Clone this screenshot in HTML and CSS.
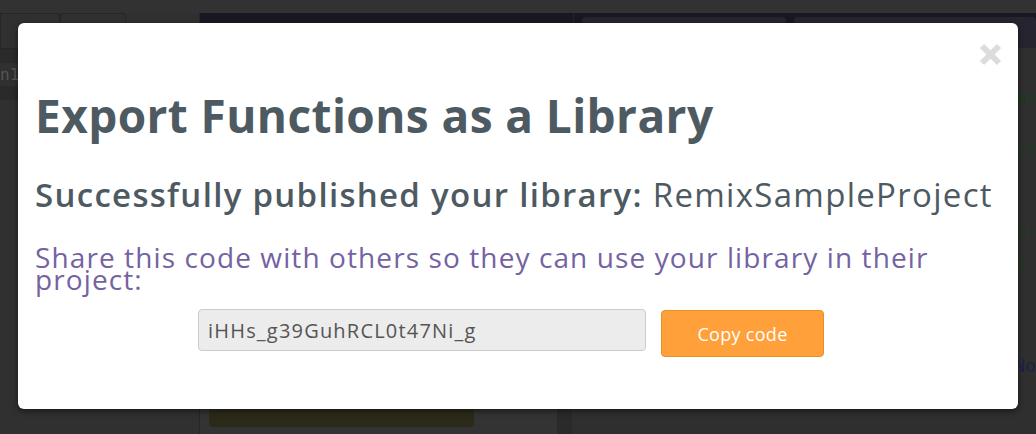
FILE: index.html
```html
<!DOCTYPE html>
<html lang="en">
<head>
  <meta charset="UTF-8">
  <meta name="viewport" content="width=device-width, initial-scale=1.0">
  <title>Export Functions as a Library</title>
  <link rel="stylesheet" href="styles.css">
</head>
<body>
  <!-- app behind the dialog (dimmed) -->
  <div class="app">
    <div class="topbar"></div>
    <div class="main">
      <div class="toolbox">
        <div class="tabs">
          <span class="tab tab-first">es</span>
          <span class="tab"></span>
        </div>
        <div class="tool-row dark"></div>
        <div class="tool-row">n1</div>
        <div class="tool-row dark"></div>
      </div>
      <div class="workspace">
        <div class="ws-header">
          <span class="ws-split"></span>
          <span class="ws-btn"></span>
          <span class="ws-btn">ow</span>
        </div>
        <div class="ws-body">
          <div class="blocks">
            <div class="block"></div>
          </div>
          <div class="code">
            <div>me</div>
            <div class="gap-s">ve</div>
            <div class="gap-l">ir</div>
            <div>d.</div>
            <div class="gap-xl navy">No</div>
          </div>
        </div>
      </div>
    </div>
  </div>

  <!-- dialog -->
  <div class="modal">
    <svg class="close" width="23" height="23" viewBox="0 0 23 23">
      <path d="M3 3 L20 20 M20 3 L3 20" stroke="#dcdcdc" stroke-width="6"/>
    </svg>
    <h1>Export Functions as a Library</h1>
    <h2>Successfully published your library: <span class="lib-name">RemixSampleProject</span></h2>
    <p class="hint">Share this code with others so they can use your library in their project:</p>
    <div class="share-row">
      <input class="code-input" type="text" value="iHHs_g39GuhRCL0t47Ni_g" readonly>
      <button class="btn">Copy code</button>
    </div>
  </div>
</body>
</html>
```

FILE: styles.css
```css
body {
    margin: 0;
    width: 1036px;
    height: 434px;
    overflow: hidden;
    background-color: #313131;
    font-family: "Open Sans", Arial, sans-serif;
}

/* dimmed app */
.app {
    height: 434px;
    display: flex;
    flex-direction: column;
}

.topbar {
    height: 13px;
    background-color: #323232;
}

.main {
    flex: 1;
    display: flex;
}

.toolbox {
    width: 204px;
    box-sizing: border-box;
    background-color: #303030;
    border-right: 1px solid #262626;
}

.tabs {
    display: flex;
    height: 35px;
    border-bottom: 1px solid #262626;
}

.tab {
    width: 64px;
    border: 1px solid #262626;
    border-bottom: none;
    border-radius: 0 4px 0 0;
    color: #4a4a4a;
    font-size: 20px;
    line-height: 35px;
    font-family: "DejaVu Sans", sans-serif;
}

.tab-first {
    width: 58px;
    text-align: right;
    overflow: hidden;
}

.tool-row {
    height: 23px;
    color: #555;
    font-size: 16px;
    line-height: 23px;
    font-family: "DejaVu Sans Mono", monospace;
}

.tool-row.dark {
    height: 14px;
    background-color: #2a2a2a;
}

.workspace {
    flex: 1;
    display: flex;
    flex-direction: column;
}

.ws-header {
    height: 35px;
    background-color: #181724;
    display: flex;
    gap: 8px;
    padding-top: 4px;
    box-sizing: border-box;
}

.ws-split {
    width: 373px;
    border-right: 1px solid #232232;
    margin-top: -4px;
}

.ws-btn {
    width: 200px;
    background-color: #26252f;
    border-radius: 4px 4px 0 0;
    color: #4a4a55;
    font-size: 20px;
    line-height: 30px;
    padding-left: 4px;
}

.ws-btn:last-child {
    flex: 1;
}

.ws-body {
    flex: 1;
    display: flex;
}

.blocks {
    width: 357px;
    background-color: #333;
    position: relative;
}

.block {
    position: absolute;
    left: 9px;
    bottom: 7px;
    width: 265px;
    height: 32px;
    background-color: #2b2a1a;
    border-radius: 4px;
}

.code {
    flex: 1;
    background-color: #2f2f2f;
    border-left: 15px solid #2a2a2a;
    padding-top: 32px;
    padding-left: 442px;
    font-family: "DejaVu Sans Mono", monospace;
    font-size: 18px;
    line-height: 34px;
    color: #1f3a22;
    white-space: nowrap;
    overflow: hidden;
}

.code .gap-s {
    margin-top: 17px;
}

.code .gap-l {
    margin-top: 51px;
}

.code .gap-xl {
    margin-top: 65px;
}

.code .navy {
    color: #1c2148;
}

/* dialog */
.modal {
    position: absolute;
    left: 18px;
    top: 23px;
    width: 1000px;
    height: 386px;
    box-sizing: border-box;
    padding: 62px 17px 0 17px;
    background-color: #fff;
    border-radius: 6px;
    box-shadow: 0 2px 6px rgba(0, 0, 0, 0.5);
    color: #4e5a61;
}

.close {
    position: absolute;
    right: 16px;
    top: 20px;
}

.modal h1 {
    margin: 0;
    font-size: 46px;
    font-weight: 700;
    line-height: 60px;
    letter-spacing: 0.4px;
}

.modal h2 {
    margin: 29px 0 0 0;
    font-size: 33px;
    font-weight: 600;
    line-height: 42px;
    letter-spacing: 1.3px;
}

.lib-name {
    font-weight: 400;
}

.hint {
    max-width: 940px;
    margin: 30px 0 0 0;
    font-size: 28px;
    line-height: 22px;
    letter-spacing: 1.1px;
    color: #7562a2;
}

.share-row {
    display: flex;
    justify-content: center;
    gap: 15px;
    margin-top: 19px;
    padding-right: 14px;
}

.code-input {
    width: 448px;
    height: 42px;
    box-sizing: border-box;
    padding: 0 9px;
    background-color: #ececec;
    border: 1px solid #ccc;
    border-radius: 4px;
    font-family: "Open Sans", Arial, sans-serif;
    font-size: 20px;
    letter-spacing: 1.2px;
    color: #555;
}

.btn {
    width: 163px;
    height: 47px;
    margin-top: 1px;
    background-color: #ffa03a;
    border: 1px solid #e8901f;
    border-radius: 4px;
    color: #fff;
    font-family: "Open Sans", Arial, sans-serif;
    font-size: 18px;
    letter-spacing: 0.3px;
}
```
